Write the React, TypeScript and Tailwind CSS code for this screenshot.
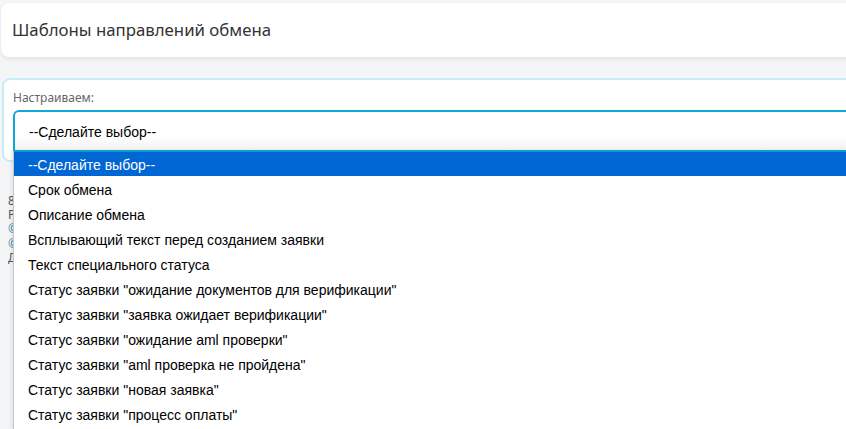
import React from "react";

const options = [
  "--Сделайте выбор--",
  "Срок обмена",
  "Описание обмена",
  "Всплывающий текст перед созданием заявки",
  "Текст специального статуса",
  'Статус заявки "ожидание документов для верификации"',
  'Статус заявки "заявка ожидает верификации"',
  'Статус заявки "ожидание aml проверки"',
  'Статус заявки "aml проверка не пройдена"',
  'Статус заявки "новая заявка"',
  'Статус заявки "процесс оплаты"',
];

export default function App() {
  return (
    <div className="relative h-[429px] w-[846px] overflow-hidden bg-[#f4f5f7] font-['Noto_Sans',sans-serif]">
      {/* Page title */}
      <div className="ml-px -mr-4 mt-[3px] flex h-[54px] items-center rounded-lg bg-white px-[11px] shadow-[0_2px_4px_rgba(0,0,0,0.08)]">
        <h1 className="text-[16.8px] text-[#333]">Шаблоны направлений обмена</h1>
      </div>

      {/* Settings card */}
      <div className="-mr-4 ml-[2px] mt-[21px] rounded-lg border-2 border-[#c5ecf8] bg-white px-[9px] pb-[8px] pt-[10px]">
        <div className="text-[12px] leading-[16px] text-[#666]">Настраиваем:</div>
        <div className="mt-[4px] flex h-[42px] items-center rounded-t-md border-2 border-b-0 border-[#10a8d8] bg-gradient-to-b from-white from-60% to-[#f0f0f0] pl-[14px] font-['Liberation_Sans',sans-serif] text-[14px] text-black">
          --Сделайте выбор--
        </div>
      </div>

      {/* Page content behind the open list (only its edge shows) */}
      <div className="ml-[8px] mt-[32px] flex w-[5px] flex-col overflow-hidden text-[12px] leading-[14.2px] text-[#555]">
        <span>8</span>
        <span>Р</span>
        <span className="text-[#2a8fb8]">©</span>
        <span className="text-[#2a8fb8]">©</span>
        <span>Д</span>
      </div>

      {/* Open native select list */}
      <div className="absolute bottom-0 left-[13px] right-0 top-[150px] border-l border-t-2 border-l-[#c8c8c8] border-t-[#0a9ec8] bg-white font-['Liberation_Sans',sans-serif] text-[14px] text-black shadow-[-2px_0_3px_rgba(0,0,0,0.08)]">
        {options.map((o, i) => (
          <div
            key={o}
            className={
              i === 0
                ? "flex h-[24px] items-center bg-[#0066d3] pl-[14px] pt-[2px] text-white"
                : "flex h-[25.1px] items-center pl-[14px] pt-[3px]"
            }
          >
            {o}
          </div>
        ))}
      </div>
    </div>
  );
}
